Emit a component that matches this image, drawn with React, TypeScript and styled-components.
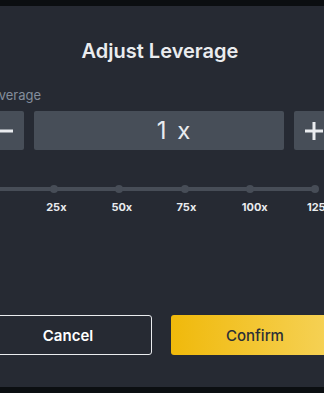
import styled, { createGlobalStyle } from "styled-components";

const GlobalStyle = createGlobalStyle`
    html, body {
        margin: 0;
        padding: 0;
        background: #0b0e11;
        font-family: Inter, "Noto Sans", sans-serif;
    }
    body {
        width: 324px;
        height: 393px;
        overflow: hidden;
    }
`;

const Page = styled.div`
    height: 393px;
    padding: 6px 0;
    box-sizing: border-box;
    display: flex;
`;

const Modal = styled.div`
    width: 355px;
    height: 381px;
    margin-left: -16px;
    flex-shrink: 0;
    background: #262a33;
    display: flex;
    flex-direction: column;
    padding-top: 33px;
    box-sizing: border-box;
`;

const Title = styled.h2`
    margin: 0;
    width: 352px;
    text-align: center;
    font-size: 20px;
    line-height: 24px;
    font-weight: 600;
    color: #eaecef;
`;

const Label = styled.div`
    margin-top: 23px;
    font-size: 13px;
    line-height: 18px;
    color: #848e9c;
`;

const InputRow = styled.div`
    margin-top: 7px;
    width: 350px;
    height: 39px;
    display: flex;
    gap: 10px;
`;

const StepButton = styled.button`
    width: 40px;
    flex-shrink: 0;
    border: none;
    border-radius: 2px;
    background: #474e58;
    color: #eaecef;
    display: flex;
    align-items: center;
    justify-content: center;
    padding: 0;
`;

const ValueBox = styled.div`
    flex: 1;
    border-radius: 2px;
    background: #474e58;
    color: #eaecef;
    display: flex;
    align-items: center;
    justify-content: center;
    padding-left: 29px;
    font-size: 24px;
    font-weight: 400;
    word-spacing: 4px;
`;

const DotRow = styled.div`
    margin-top: 35px;
    margin-left: 1px;
    width: 334px;
    height: 8px;
    display: flex;
    justify-content: space-between;
    align-items: center;
    background: linear-gradient(#474d57, #474d57) center / calc(100% - 8px) 4px no-repeat;
`;

const Dot = styled.span`
    width: 8px;
    height: 8px;
    border-radius: 50%;
    background: #474d57;
`;

const MarkRow = styled.div`
    margin-top: 7px;
    margin-left: -3px;
    display: grid;
    grid-template-columns: repeat(6, 65.2px);
`;

const Mark = styled.span`
    font-size: 11px;
    line-height: 14px;
    font-weight: 700;
    color: #eaecef;
    white-space: nowrap;
`;

const Footer = styled.div`
    margin-top: auto;
    margin-bottom: 32px;
    display: grid;
    grid-template-columns: 1fr 1fr;
    gap: 19px;
    height: 40px;
`;

const ActionButton = styled.button<{ $primary?: boolean }>`
    border-radius: 3px;
    font-family: Inter, "Noto Sans", sans-serif;
    font-size: 15px;
    font-weight: ${p => (p.$primary ? 500 : 600)};
    color: ${p => (p.$primary ? "#2b2f36" : "#ffffff")};
    border: ${p => (p.$primary ? "none" : "1px solid #eaecef")};
    background: ${p => (p.$primary ? "linear-gradient(90deg, #f0b90b 0%, #f6d35a 100%)" : "transparent")};
`;

const marks = ["1x", "25x", "50x", "75x", "100x", "125x"];

function App() {
    return (
        <>
            <GlobalStyle />
            <Page>
                <Modal>
                    <Title>Adjust Leverage</Title>
                    <Label>Leverage</Label>
                    <InputRow>
                        <StepButton aria-label="decrease">
                            <svg width="18" height="18" viewBox="0 0 18 18">
                                <rect x="0" y="7.5" width="18" height="3" fill="#eaecef" />
                            </svg>
                        </StepButton>
                        <ValueBox>1 x</ValueBox>
                        <StepButton aria-label="increase">
                            <svg width="18" height="18" viewBox="0 0 18 18">
                                <rect x="0" y="7.5" width="18" height="3" fill="#eaecef" />
                                <rect x="7.5" y="0" width="3" height="18" fill="#eaecef" />
                            </svg>
                        </StepButton>
                    </InputRow>
                    <DotRow>
                        {marks.map(m => <Dot key={m} />)}
                    </DotRow>
                    <MarkRow>
                        {marks.map(m => <Mark key={m}>{m}</Mark>)}
                    </MarkRow>
                    <Footer>
                        <ActionButton>Cancel</ActionButton>
                        <ActionButton $primary>Confirm</ActionButton>
                    </Footer>
                </Modal>
            </Page>
        </>
    );
}

export default App;
